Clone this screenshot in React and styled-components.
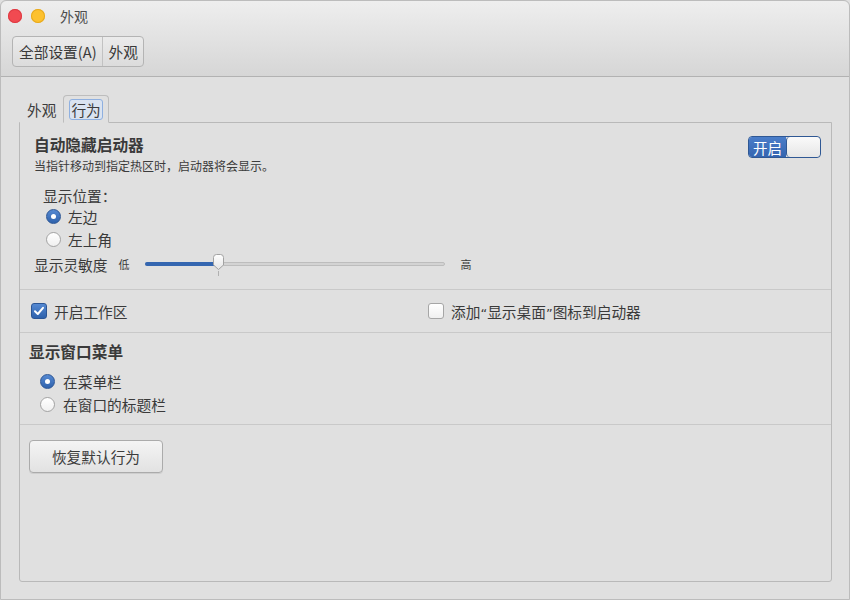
import styled, { createGlobalStyle } from "styled-components";

const GlobalStyle = createGlobalStyle`
    html, body {
        margin: 0;
        padding: 0;
        background: #e0e0e0;
    }
    * {
        box-sizing: border-box;
    }
`;

const FONT = `"Noto Sans CJK SC", "Noto Sans", "DejaVu Sans", sans-serif`;

const Window = styled.div`
    width: 850px;
    height: 600px;
    display: flex;
    flex-direction: column;
    border: 1px solid #bcbcbc;
    border-radius: 6px 6px 0 0;
    background: #e0e0e0;
    font-family: ${FONT};
    color: #3c3c3c;
    overflow: hidden;
`;

const Header = styled.header`
    background: linear-gradient(#eeeeee, #d6d6d6);
    border-bottom: 1px solid #b2b2b2;
    border-radius: 6px 6px 0 0;
`;

const TitleBar = styled.div`
    height: 29px;
    display: flex;
    align-items: center;
    padding-left: 7px;
    gap: 9px;
`;

const Light = styled.span`
    width: 14px;
    height: 14px;
    border-radius: 50%;
    background: ${({color}) => color};
    box-shadow: inset 0 0 0 1px ${({edge}) => edge};
`;

const Title = styled.span`
    margin-left: 6px;
    font-size: 14px;
    color: #4e4e4e;
`;

const Toolbar = styled.div`
    display: flex;
    padding: 6px 11px 9px;
`;

const Crumbs = styled.div`
    display: flex;
    height: 31px;
    border: 1px solid #b4b4b4;
    border-radius: 4px;
    background: linear-gradient(#ebebeb, #dcdcdc);
    overflow: hidden;
`;

const Crumb = styled.span`
    display: flex;
    align-items: center;
    padding: 0 5px 0 6px;
    font-size: 14.7px;
    color: #3a3a3a;
    & + & {
        border-left: 1px solid #c2c2c2;
    }
`;

const Body = styled.main`
    flex: 1;
    display: flex;
    flex-direction: column;
    padding: 18px 17px 17px 18px;
`;

const TabStrip = styled.div`
    display: flex;
    height: 28px;
    padding-left: 1px;
    margin-bottom: -1px;
    position: relative;
    z-index: 1;
`;

const Tab = styled.div`
    display: flex;
    align-items: center;
    padding: 0 ${({active}) => active ? 5 : 6}px;
    font-size: 14.7px;
    color: #3c3c3c;
    border: 1px solid ${({active}) => active ? '#bdbdbd' : 'transparent'};
    border-bottom-color: ${({active}) => active ? '#e0e0e0' : 'transparent'};
    border-radius: 4px 4px 0 0;
    background: #e0e0e0;
`;

const Focus = styled.span`
    padding: 0 1px;
    line-height: 19px;
    border: 1px solid #8fb0e0;
    border-radius: 3px;
    background: #dae3f0;
`;

const Panel = styled.section`
    flex: 1;
    display: flex;
    flex-direction: column;
    border: 1px solid #b9b9b9;
    border-radius: 0 0 3px 3px;
`;

const Section = styled.div`
    display: flex;
    flex-direction: column;
    padding: ${({pad}) => pad};
    border-bottom: ${({last}) => last ? 'none' : '1px solid #c9c9c9'};
`;

const HeadRow = styled.div`
    display: flex;
    justify-content: space-between;
    align-items: flex-start;
`;

const Heading = styled.div`
    font-size: 15.7px;
    font-weight: bold;
    line-height: 20px;
    color: #3a3a3a;
`;

const Hint = styled.div`
    margin-top: 3px;
    font-size: 12px;
    line-height: 16px;
    color: #3c3c3c;
`;

const Toggle = styled.div`
    display: flex;
    width: 73px;
    height: 22px;
    margin: 1px 1px 0 0;
    border: 1px solid #2f5894;
    border-radius: 4px;
    overflow: hidden;
`;

const ToggleLabel = styled.span`
    width: 37px;
    display: flex;
    align-items: center;
    justify-content: center;
    font-size: 14.5px;
    color: #ffffff;
    background: linear-gradient(#4a7dc9, #3565b0);
`;

const Knob = styled.span`
    flex: 1;
    border-left: 1px solid #2f5894;
    border-radius: 4px;
    background: linear-gradient(#fafafa, #e6e6e6);
`;

const SubLabel = styled.div`
    font-size: 14.7px;
    line-height: 18px;
    margin: 13px 0 0 9px;
`;

const OptionRow = styled.label`
    display: flex;
    align-items: center;
    gap: ${({gap}) => gap || 7}px;
    height: 23px;
    padding-left: ${({indent}) => indent || 0}px;
    font-size: 14.7px;
    color: #3a3a3a;
`;

const RadioDot = styled.span`
    width: 15px;
    height: 15px;
    border-radius: 50%;
    display: flex;
    align-items: center;
    justify-content: center;
    border: 1px solid ${({on}) => on ? '#2c5695' : '#a3a3a3'};
    background: ${({on}) => on ? 'linear-gradient(#5589d2, #2f62ac)' : 'linear-gradient(#ffffff, #f0f0f0)'};
    &::after {
        content: "";
        width: 5px;
        height: 5px;
        border-radius: 50%;
        background: #ffffff;
        display: ${({on}) => on ? 'block' : 'none'};
    }
`;

const Radio = ({on, label, indent, gap}) => (
    <OptionRow indent={indent} gap={gap}>
        <RadioDot on={on}/>
        {label}
    </OptionRow>
);

const SliderRow = styled.div`
    display: flex;
    align-items: center;
    height: 20px;
    margin-top: 3px;
    font-size: 14.7px;
`;

const Small = styled.span`
    font-size: 11px;
    margin: ${({m}) => m};
`;

const Track = styled.div`
    position: relative;
    width: 300px;
    height: 4px;
    border-radius: 2px;
    background: #d3d3d3;
    border: 1px solid #bdbdbd;
`;

const Fill = styled.div`
    background: #3466b0;
    border-radius: 2px 0 0 2px;
    margin: -1px 0 0 -1px;
    height: 4px;
`;

const Thumb = styled.svg`
    position: absolute;
    top: -9px;
    margin-left: -6px;
`;

const Tick = styled.span`
    position: absolute;
    top: 8px;
    width: 1px;
    height: 5px;
    background: #b0b0b0;
`;

const Slider = ({value}) => (
    <Track>
        <Fill style={{width: `${value}%`}}/>
        <Thumb width="13" height="17" viewBox="0 0 13 17" style={{left: `${value}%`}}>
            <defs>
                <linearGradient id="tg" x1="0" y1="0" x2="0" y2="1">
                    <stop offset="0" stopColor="#ffffff"/>
                    <stop offset="1" stopColor="#e4e4e4"/>
                </linearGradient>
            </defs>
            <path d="M1.5 3.5 Q1.5 0.5 4.5 0.5 L8.5 0.5 Q11.5 0.5 11.5 3.5 L11.5 11 L6.5 15.5 L1.5 11 Z"
                  fill="url(#tg)" stroke="#a2a2a2"/>
        </Thumb>
        <Tick style={{left: `${value}%`}}/>
    </Track>
);

const CheckRow = styled.div`
    display: flex;
    align-items: center;
    height: 42px;
    padding-left: 11px;
`;

const CheckItem = styled.label`
    display: flex;
    align-items: center;
    gap: 7px;
    font-size: 14.7px;
    width: ${({w}) => w || 'auto'};
    color: #3a3a3a;
`;

const Quote = styled.span`
    font-family: "DejaVu Sans", sans-serif;
    font-size: 13px;
`;

const Box = styled.span`
    width: 16px;
    height: 16px;
    border-radius: 3px;
    display: flex;
    align-items: center;
    justify-content: center;
    border: 1px solid ${({on}) => on ? '#2c5695' : '#a6a6a6'};
    background: ${({on}) => on ? 'linear-gradient(#5589d2, #2f62ac)' : 'linear-gradient(#ffffff, #f0f0f0)'};
`;

const Check = ({on, label, w}) => (
    <CheckItem w={w}>
        <Box on={on}>
            {on && (
                <svg width="12" height="12" viewBox="0 0 12 12">
                    <path d="M2 6.3 L4.8 9 L10 2.8" fill="none" stroke="#ffffff" strokeWidth="2" strokeLinecap="round" strokeLinejoin="round"/>
                </svg>
            )}
        </Box>
        <span>{label}</span>
    </CheckItem>
);

const Spacer = styled.div`
    height: ${({h}) => h}px;
`;

const Button = styled.button`
    width: 134px;
    height: 33px;
    font-family: ${FONT};
    font-size: 14.7px;
    color: #3c3c3c;
    border: 1px solid #ababab;
    border-radius: 4px;
    background: linear-gradient(#f4f4f4, #e2e2e2);
    box-shadow: 0 1px 0 rgba(0, 0, 0, 0.08);
`;

const App = () => (
    <>
        <GlobalStyle/>
        <Window>
            <Header>
                <TitleBar>
                    <Light color="#f14a51" edge="#de3b43"/>
                    <Light color="#fdc12e" edge="#e6a91f"/>
                    <Title>外观</Title>
                </TitleBar>
                <Toolbar>
                    <Crumbs>
                        <Crumb>全部设置(A)</Crumb>
                        <Crumb>外观</Crumb>
                    </Crumbs>
                </Toolbar>
            </Header>
            <Body>
                <TabStrip>
                    <Tab>外观</Tab>
                    <Tab active><Focus>行为</Focus></Tab>
                </TabStrip>
                <Panel>
                    <Section pad="12px 9px 15px 14px">
                        <HeadRow>
                            <div>
                                <Heading>自动隐藏启动器</Heading>
                                <Hint>当指针移动到指定热区时，启动器将会显示。</Hint>
                            </div>
                            <Toggle>
                                <ToggleLabel>开启</ToggleLabel>
                                <Knob/>
                            </Toggle>
                        </HeadRow>
                        <SubLabel>显示位置：</SubLabel>
                        <Radio on label="左边" indent={12}/>
                        <Radio label="左上角" indent={12}/>
                        <SliderRow>
                            显示灵敏度
                            <Small m="0 16px 0 11px">低</Small>
                            <Slider value={24}/>
                            <Small m="0 0 0 15px">高</Small>
                        </SliderRow>
                    </Section>
                    <Section pad="0">
                        <CheckRow>
                            <Check on label="开启工作区" w="397px"/>
                            <Check label={<>添加<Quote>“</Quote>显示桌面<Quote>”</Quote>图标到启动器</>}/>
                        </CheckRow>
                    </Section>
                    <Section pad="9px 9px 8px 9px">
                        <Heading>显示窗口菜单</Heading>
                        <Spacer h={8}/>
                        <Radio on label="在菜单栏" indent={11} gap={8}/>
                        <Radio label="在窗口的标题栏" indent={11} gap={8}/>
                    </Section>
                    <Section pad="15px 9px" last>
                        <div><Button>恢复默认行为</Button></div>
                    </Section>
                </Panel>
            </Body>
        </Window>
    </>
);

export default App;
